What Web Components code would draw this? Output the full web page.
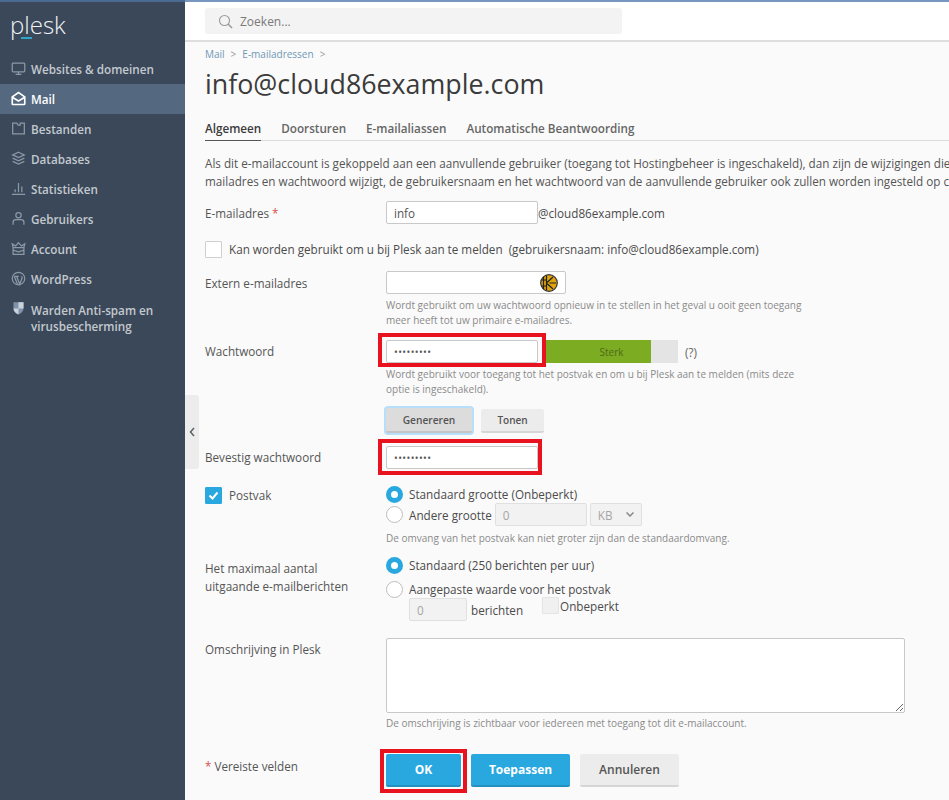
<!DOCTYPE html>
<html lang="nl">
<head>
<meta charset="utf-8">
<title>Plesk mail</title>
<style>
  html, body { margin: 0; height: 800px; overflow: hidden; }
  body { font-family: "Open Sans", sans-serif; color: #4b4b4b; background: #fafafa; }
  plesk-app { height: 800px; }
</style>
</head>
<body>
<plesk-app>
  <plesk-sidebar slot="side"></plesk-sidebar>
  <plesk-topbar slot="top"></plesk-topbar>
  <mail-page></mail-page>
</plesk-app>

<script>
const ICONS = {
  monitor: '<rect x="1.500" y="2.500" width="15" height="10.500" rx="1"/><path d="M5.500 16h7M9 13v3"/>',
  mail: '<path d="M1.500 7 9 1.800 16.500 7v8.200a1 1 0 0 1-1 1h-13a1 1 0 0 1-1-1z"/><path d="M1.500 7.500 9 12l7.500-4.500"/>',
  folder: '<path d="M2 2.500h5l1.500 2.500h2.500V2.500h5v13H2z"/>',
  db: '<path d="M9 1.500l7 3.200-7 3.200-7-3.200zM2 8.500l7 3.200 7-3.200M2 12.500l7 3.200 7-3.200"/>',
  stats: '<path d="M1 16h16M5 13.500V10M9 13.500V2.500M13 13.500V6.500"/>',
  user: '<circle cx="9" cy="5" r="3.200"/><path d="M2.500 16.500v-3c0-2 1.500-3.200 3.500-3.200h6c2 0 3.500 1.200 3.500 3.200v3"/>',
  crown: '<path d="M2.500 8 1.500 3.500 5.500 6 9 2l3.500 4 4-2.500L15.500 8M2.500 8h13v8h-13zM2.500 11l6.500 2 6.500-2"/>',
  wp: '<circle cx="9" cy="9" r="7.500"/><path d="M4 6.500 7.800 16M6.800 6.500 10.500 16 13.200 8.800c.4-1.200-.1-2-.8-2.300M3.800 6.500h5.500"/>'
};

class PleskIcon extends HTMLElement {
  connectedCallback() {
    const name = this.getAttribute('name');
    const root = this.attachShadow({ mode: 'open' });
    if (name === 'shield') {
      root.innerHTML = `<style>:host{display:block;width:15px;height:15px}svg{display:block}</style>
        <svg viewBox="0 0 18 18" width="15" height="15"><path d="M3 1.500h12V9c0 3.500-3 5.800-6 7.200C6 14.800 3 12.500 3 9z" fill="#7f93a8"/><path d="M9 1.500h6V9H9zM3 9h6v7.200C6 14.800 3 12.500 3 9z" fill="#c9d3dd"/></svg>`;
      return;
    }
    const stroke = this.hasAttribute('active') ? '#fff' : '#8b98a6';
    const width = this.hasAttribute('active') ? 2 : 1.5;
    root.innerHTML = `<style>:host{display:block;width:15px;height:15px}svg{display:block}</style>
      <svg viewBox="0 0 18 18" width="15" height="15" fill="none" stroke="${stroke}" stroke-width="${width}">${ICONS[name]}</svg>`;
  }
}
customElements.define('plesk-icon', PleskIcon);

class PleskApp extends HTMLElement {
  connectedCallback() {
    this.attachShadow({ mode: 'open' }).innerHTML = `
      <style>
        :host { display: grid; grid-template-columns: 185px 1fr; grid-template-rows: 42px 1fr; overflow: hidden; position: relative; }
        .side { grid-row: 1 / 3; display: block; min-height: 0; }
        .top { grid-column: 2; }
        .main { grid-column: 2; min-width: 0; overflow: hidden; }
        .stripe { position: absolute; left: 0; right: 0; top: 0; height: 2px; background: #7797bf; }
        .stripe-left { position: absolute; left: 0; width: 185px; top: 0; height: 2px; background: #4a6a94; }
        .toggle { position: absolute; left: 185px; top: 395px; width: 14px; height: 74px; background: #ececec; border-radius: 0 3px 3px 0; display: flex; align-items: center; justify-content: center; }
      </style>
      <div class="side"><slot name="side"></slot></div>
      <div class="top"><slot name="top"></slot></div>
      <div class="main"><slot></slot></div>
      <div class="stripe"></div><div class="stripe-left"></div>
      <div class="toggle"><svg width="6" height="10" viewBox="0 0 6 10" fill="none" stroke="#55616d" stroke-width="1.500"><path d="M5 1 1.500 5 5 9"/></svg></div>`;
  }
}
customElements.define('plesk-app', PleskApp);

class NavItem extends HTMLElement {
  connectedCallback() {
    const active = this.hasAttribute('active');
    const icon = this.getAttribute('icon');
    this.attachShadow({ mode: 'open' }).innerHTML = `
      <style>
        :host { display: flex; gap: 5px; padding: 7px 10px 7px 11px; font: 600 11.700px/16px "Open Sans", sans-serif; color: ${active ? '#fff' : '#c3c9cf'}; background: ${active ? '#54697f' : 'transparent'}; }
        plesk-icon { flex: none; }
        :host([tall]) span { padding-top: 1px; }
      </style>
      <plesk-icon name="${icon}" ${active ? 'active' : ''}></plesk-icon><span><slot></slot></span>`;
  }
}
customElements.define('nav-item', NavItem);

class PleskSidebar extends HTMLElement {
  connectedCallback() {
    this.attachShadow({ mode: 'open' }).innerHTML = `
      <style>
        :host { display: block; height: 800px; background: #3a4859; width: 185px; }
        .logo { height: 54px; padding-left: 10px; color: #f2f4f6; font: 300 24px/1 "Open Sans", sans-serif; position: relative; box-sizing: border-box; }
        .logo span { display: block; padding-top: 13px; }
        .logo i { position: absolute; left: 21px; top: 37px; width: 11px; height: 2px; background: #2fa6c9; }
        nav { display: flex; flex-direction: column; }
      </style>
      <div class="logo"><span>plesk</span><i></i></div>
      <nav>
        <nav-item icon="monitor">Websites &amp; domeinen</nav-item>
        <nav-item icon="mail" active>Mail</nav-item>
        <nav-item icon="folder">Bestanden</nav-item>
        <nav-item icon="db">Databases</nav-item>
        <nav-item icon="stats">Statistieken</nav-item>
        <nav-item icon="user">Gebruikers</nav-item>
        <nav-item icon="crown">Account</nav-item>
        <nav-item icon="wp">WordPress</nav-item>
        <nav-item icon="shield" tall>Warden Anti-spam en virusbescherming</nav-item>
      </nav>`;
  }
}
customElements.define('plesk-sidebar', PleskSidebar);

class PleskTopbar extends HTMLElement {
  connectedCallback() {
    this.attachShadow({ mode: 'open' }).innerHTML = `
      <style>
        :host { display: block; height: 42px; box-sizing: border-box; background: #fff; border-bottom: 2px solid #dedede; padding: 8px 327px 0 20px; }
        .search { height: 26px; background: #f3f3f3; border-radius: 3px; display: flex; align-items: center; gap: 7px; padding-left: 13px; font: 12px "Open Sans", sans-serif; color: #7a7a7a; }
        svg { display: block; }
      </style>
      <div class="search">
        <svg width="15" height="15" viewBox="0 0 15 15" fill="none" stroke="#9a9a9a" stroke-width="1.100"><circle cx="6.500" cy="6.500" r="5"/><path d="M10 10l4 4" stroke-width="1.600"/></svg>
        <span>Zoeken...</span>
      </div>`;
  }
}
customElements.define('plesk-topbar', PleskTopbar);

class FormRow extends HTMLElement {
  connectedCallback() {
    const label = this.getAttribute('label') || '';
    this.attachShadow({ mode: 'open' }).innerHTML = `
      <style>
        :host { display: grid; grid-template-columns: 181px 1fr; font-size: 11.700px; line-height: 18px; color: #4b4b4b; }
        .label { padding-top: var(--label-top, 3px); color: #555; }
        :host([flush]) .label { padding-top: 0; }
      </style>
      <div class="label">${label}<slot name="label"></slot></div>
      <div><slot></slot></div>`;
  }
}
customElements.define('form-row', FormRow);

class TextBox extends HTMLElement {
  connectedCallback() {
    const w = this.getAttribute('width') || 152;
    const h = this.getAttribute('height') || 23;
    this.attachShadow({ mode: 'open' }).innerHTML = `
      <style>
        :host { display: inline-flex; flex: none; box-sizing: border-box; width: ${w}px; height: ${h}px; border: 1px solid #c8c8c8; border-radius: 2px; background: #fff; padding: 0 7px; align-items: center; font-size: 11.700px; color: #555; vertical-align: middle; position: relative; }
        :host([disabled]) { background: #f2f2f2; color: #a5a5a5; border-color: #e0e0e0; }
      </style><slot></slot>`;
  }
}
customElements.define('text-box', TextBox);

class RadioDot extends HTMLElement {
  connectedCallback() {
    const on = this.hasAttribute('checked');
    this.attachShadow({ mode: 'open' }).innerHTML = `
      <style>
        :host { display: inline-block; flex: none; box-sizing: border-box; width: 17px; height: 17px; border-radius: 50%; background: #fff; border: ${on ? '5px solid #28a8df' : '1px solid #bdbdbd'}; }
      </style>`;
  }
}
customElements.define('radio-dot', RadioDot);

class CheckBox extends HTMLElement {
  connectedCallback() {
    const on = this.hasAttribute('checked');
    this.attachShadow({ mode: 'open' }).innerHTML = `
      <style>
        :host { display: inline-block; flex: none; box-sizing: border-box; width: 17px; height: 17px; border-radius: 1px; border: 1px solid ${on ? '#28a8df' : '#cfcfcf'}; background: ${on ? '#28a8df' : '#fff'}; }
        :host([disabled]) { background: #f0f0f0; border-color: #e4e4e4; }
        svg { display: block; }
      </style>
      ${on ? '<svg width="15" height="15" viewBox="0 0 15 15" fill="none" stroke="#fff" stroke-width="2"><path d="M3.500 7.500 6.500 10.500 11.500 4.500"/></svg>' : ''}`;
  }
}
customElements.define('check-box', CheckBox);

class PBtn extends HTMLElement {
  connectedCallback() {
    this.attachShadow({ mode: 'open' }).innerHTML = `
      <style>
        :host { display: inline-flex; box-sizing: border-box; height: var(--h, 33px); width: var(--w, auto); align-items: center; justify-content: center; font: 600 12px "Open Sans", sans-serif; border-radius: 2px; background: #ececec; color: #555; border-bottom: 2px solid #d6d6d6; }
        :host([primary]) { background: #28a8df; color: #fff; border-bottom-color: #2490bf; font-weight: 700; }
        :host([pressed]) { background: #dcdcdc; border-bottom-color: #c5c5c5; box-shadow: 0 0 0 2px #b7defa; }
      </style><slot></slot>`;
  }
}
customElements.define('p-btn', PBtn);

class RedBox extends HTMLElement {
  connectedCallback() {
    this.attachShadow({ mode: 'open' }).innerHTML = `
      <style>
        :host { position: absolute; box-sizing: border-box; border: 4px solid #e8131f; pointer-events: none; }
      </style>`;
  }
}
customElements.define('red-box', RedBox);

class MailPage extends HTMLElement {
  connectedCallback() {
    this.attachShadow({ mode: 'open' }).innerHTML = `
      <style>
        :host { display: block; position: relative; height: 758px; overflow: hidden; background: #fafafa; padding-left: 20px; font: 11.700px/18px "Open Sans", sans-serif; color: #4b4b4b; }
        .crumbs { padding-top: 5px; font-size: 10px; line-height: 14px; color: #6f98b5; display: flex; gap: 6px; }
        .crumbs i { font-style: normal; color: #999; }
        h1 { margin: 4px 0 0; font: 400 26.800px/38px "Open Sans", sans-serif; color: #3b3b3b; }
        .tabs { margin: 16px -20px 0 0; display: flex; gap: 20px; border-bottom: 1px solid #dcdcdc; font-weight: 600; font-size: 11.700px; line-height: 18px; color: #666; }
        .tabs span { padding-bottom: 3px; }
        .tabs .on { color: #3b3b3b; box-shadow: 0 1px 0 #555; }
        .intro { margin: 13px 0 0; white-space: nowrap; color: #555; line-height: 18px; }
        .hint { font-size: 10px; line-height: 15px; color: #8a8a8a; }
        .inline { display: flex; align-items: center; }
        .rows { display: flex; flex-direction: column; }
        .meter { width: 133px; height: 23px; background: linear-gradient(to right, #7cac21 106px, #e4e4e4 106px); color: #4f6a1c; font-size: 10px; display: flex; align-items: center; justify-content: center; }
        .actions { display: flex; gap: 10px; }
        b { font-weight: 400; color: #d9534f; }
        textarea { display: block; box-sizing: border-box; width: 519px; height: 75px; border: 1px solid #c8c8c8; background: #fff; border-radius: 2px; margin: 0; }
        .radio-line { display: flex; align-items: center; gap: 6px; }
      </style>
      <div class="crumbs"><span>Mail</span><i>&gt;</i><span>E-mailadressen</span><i>&gt;</i></div>
      <h1>info@cloud86example.com</h1>
      <div class="tabs"><span class="on">Algemeen</span><span>Doorsturen</span><span>E-mailaliassen</span><span>Automatische Beantwoording</span></div>
      <p class="intro">Als dit e-mailaccount is gekoppeld aan een aanvullende gebruiker (toegang tot Hostingbeheer is ingeschakeld), dan zijn de wijzigingen die<br>mailadres en wachtwoord wijzigt, de gebruikersnaam en het wachtwoord van de aanvullende gebruiker ook zullen worden ingesteld op c</p>

      <div class="rows">
        <form-row style="margin-top:11px">
          <span slot="label">E-mailadres <b>*</b></span>
          <div class="inline"><text-box>info</text-box><span>@cloud86example.com</span></div>
        </form-row>

        <div class="inline" style="gap:7px;margin-top:16px"><check-box></check-box><span>Kan worden gebruikt om u bij Plesk aan te melden &nbsp;(gebruikersnaam: info@cloud86example.com)</span></div>

        <form-row label="Extern e-mailadres" style="margin-top:13px">
          <text-box width="180">
            <svg style="position:absolute;right:7px;top:2px" width="18" height="18" viewBox="0 0 18 18"><circle cx="9" cy="9" r="8.300" fill="#dfa40b" stroke="#333" stroke-width="1.200"/><path d="M6.500 1.500v15M6.500 9 13 3M6.500 9l6.500 6M9.500 9H16M1.500 6h5M1.500 12h5M3.500 3v12" fill="none" stroke="#222" stroke-width="1.200"/></svg>
          </text-box>
          <div class="hint" style="margin-top:4px;width:430px">Wordt gebruikt om uw wachtwoord opnieuw in te stellen in het geval u ooit geen toegang meer heeft tot uw primaire e-mailadres.</div>
        </form-row>

        <form-row label="Wachtwoord" style="margin-top:12px;--label-top:2px">
          <div class="inline" style="gap:7px"><text-box style="letter-spacing:.4px;font-size:10px">•••••••••</text-box><div class="inline"><div class="meter">Sterk</div><span style="margin-left:7px;color:#666">(?)</span></div></div>
          <div class="hint" style="margin-top:4px;width:430px">Wordt gebruikt voor toegang tot het postvak en om u bij Plesk aan te melden (mits deze optie is ingeschakeld).</div>
          <div class="inline" style="gap:9px;margin-top:11px"><p-btn pressed style="--w:86px;--h:25px;font-size:10.200px">Genereren</p-btn><p-btn style="--w:63px;--h:24px;font-size:10px">Tonen</p-btn></div>
        </form-row>

        <form-row label="Bevestig wachtwoord" style="margin-top:13px;--label-top:2px">
          <text-box style="letter-spacing:.4px;font-size:10px">•••••••••</text-box>
        </form-row>

        <form-row flush style="margin-top:16px">
          <div slot="label" class="inline" style="gap:7px;margin-top:1px"><check-box checked></check-box><span>Postvak</span></div>
          <div class="radio-line"><radio-dot checked></radio-dot><span>Standaard grootte (Onbeperkt)</span></div>
          <div class="radio-line"><radio-dot></radio-dot><span>Andere grootte</span><text-box disabled width="92" style="margin-left:-3px">0</text-box><text-box disabled width="52" style="margin-left:-3px;justify-content:space-between">KB<svg width="8" height="5" viewBox="0 0 8 5" fill="none" stroke="#888" stroke-width="1.500"><path d="M.5.500 4 4 7.500.500"/></svg></text-box></div>
          <div class="hint" style="margin-top:5px">De omvang van het postvak kan niet groter zijn dan de standaardomvang.</div>
        </form-row>

        <form-row style="margin-top:10px">
          <div slot="label">Het maximaal aantal<br>uitgaande e-mailberichten</div>
          <div class="radio-line"><radio-dot checked></radio-dot><span>Standaard (250 berichten per uur)</span></div>
          <div class="radio-line" style="margin-top:6px"><radio-dot></radio-dot><span>Aangepaste waarde voor het postvak</span></div>
          <div class="inline" style="margin:0 0 0 23px;gap:4px"><text-box disabled width="58">0</text-box><span>berichten</span><check-box disabled style="margin:-1px 0 0 15px;align-self:flex-start"></check-box><span style="margin:-1px 0 0 -3px;align-self:flex-start">Onbeperkt</span></div>
        </form-row>

        <form-row label="Omschrijving in Plesk" style="margin-top:17px;--label-top:2px">
          <textarea></textarea>
          <div class="hint" style="margin-top:3px">De omschrijving is zichtbaar voor iedereen met toegang tot dit e-mailaccount.</div>
        </form-row>

        <form-row style="margin-top:23px">
          <span slot="label"><b>*</b> Vereiste velden</span>
          <div class="actions"><p-btn primary style="--w:75px">OK</p-btn><p-btn primary style="--w:99px">Toepassen</p-btn><p-btn style="--w:99px">Annuleren</p-btn></div>
        </form-row>
      </div>
      <red-box style="left:193px;top:291px;width:168px;height:34px"></red-box>
      <red-box style="left:193px;top:397px;width:164px;height:36px"></red-box>
      <red-box style="left:195px;top:707px;width:87px;height:44px"></red-box>`;
  }
}
customElements.define('mail-page', MailPage);
</script>
</body>
</html>
